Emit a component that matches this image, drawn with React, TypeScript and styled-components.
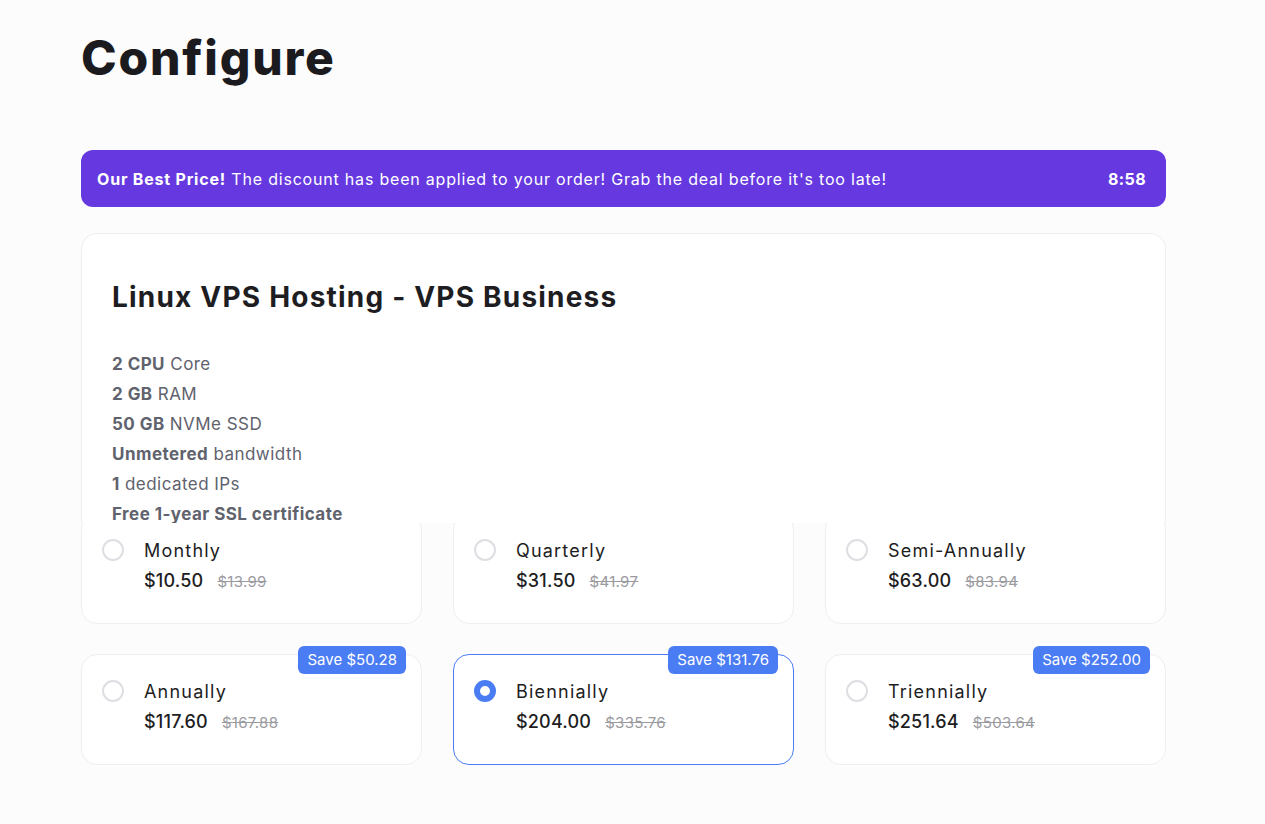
import React, { useState } from 'react';
import styled, { createGlobalStyle } from 'styled-components';

const GlobalStyle = createGlobalStyle`
  body {
    margin: 0;
    background: #fcfcfc;
    font-family: Inter, "Noto Sans", sans-serif;
    color: #1d1d22;
  }
`;

const Page = styled.div`
  width: 1085px;
  margin-left: 81px;
  padding-top: 28px;
`;

const Title = styled.h1`
  margin: 0;
  font-size: 48px;
  font-weight: 800;
  letter-spacing: 1.8px;
  line-height: 60px;
  color: #1b1b1f;
`;

const Banner = styled.div`
  margin-top: 62px;
  height: 57px;
  border-radius: 12px;
  background: #6639e0;
  color: #fff;
  display: flex;
  align-items: center;
  justify-content: space-between;
  padding: 0 20px 0 16px;
  font-size: 16px;
  letter-spacing: 0.8px;
`;

const Timer = styled.span`
  font-weight: 700;
  letter-spacing: 0.4px;
`;

const ProductCard = styled.div`
  position: relative;
  z-index: 1;
  margin-top: 26px;
  height: 290px;
  background: #fff;
  border: 1px solid #efefef;
  border-bottom: none;
  border-radius: 16px 16px 0 0;
  padding: 43px 30px 0;
  box-sizing: border-box;
  overflow: hidden;
`;

const ProductName = styled.h2`
  margin: 0;
  font-size: 28px;
  font-weight: 700;
  line-height: 40px;
  letter-spacing: 1.2px;
`;

const Features = styled.ul`
  list-style: none;
  margin: 32px 0 0;
  padding: 0;
  font-size: 17px;
  line-height: 30px;
  letter-spacing: 0.45px;
  color: #60626d;
`;

const Strong = styled.b`
  font-weight: 700;
`;

const Options = styled.div`
  margin-top: -10px;
  display: grid;
  grid-template-columns: repeat(3, 1fr);
  column-gap: 31px;
  row-gap: 30px;
`;

const OptionCard = styled.div<{ $active: boolean }>`
  position: relative;
  height: 111px;
  box-sizing: border-box;
  background: #fff;
  border: 1px solid ${(p) => (p.$active ? '#4a7cf4' : '#efefef')};
  border-radius: 16px;
  padding: 24px 20px 0;
  display: flex;
  gap: 20px;
  cursor: pointer;
`;

const Radio = styled.span<{ $active: boolean }>`
  flex: none;
  margin-top: 1px;
  width: 22px;
  height: 22px;
  box-sizing: border-box;
  border-radius: 50%;
  border: ${(p) => (p.$active ? '6px solid #4a7cf4' : '2px solid #dedee3')};
  background: #fff;
`;

const Info = styled.div`
  display: flex;
  flex-direction: column;
  gap: 4px;
`;

const Period = styled.div`
  font-size: 18px;
  line-height: 26px;
  letter-spacing: 1.2px;
`;

const PriceRow = styled.div`
  display: flex;
  align-items: baseline;
  gap: 14px;
`;

const Price = styled.span`
  font-size: 18px;
  font-weight: 500;
  line-height: 26px;
  letter-spacing: 0.2px;
`;

const OldPrice = styled.span`
  font-size: 15px;
  color: #9a9a9f;
  text-decoration: line-through;
  letter-spacing: 0.3px;
`;

const Badge = styled.span`
  position: absolute;
  top: -9px;
  right: 15px;
  background: #4a7cf4;
  color: #fff;
  font-size: 15px;
  line-height: 28px;
  padding: 0 9px;
  border-radius: 6px;
`;

const plans = [
  { name: 'Monthly', price: '$10.50', old: '$13.99' },
  { name: 'Quarterly', price: '$31.50', old: '$41.97' },
  { name: 'Semi-Annually', price: '$63.00', old: '$83.94' },
  { name: 'Annually', price: '$117.60', old: '$167.88', save: '$50.28' },
  { name: 'Biennially', price: '$204.00', old: '$335.76', save: '$131.76' },
  { name: 'Triennially', price: '$251.64', old: '$503.64', save: '$252.00' },
];

export default function App() {
  const [selected, setSelected] = useState('Biennially');

  return (
    <>
      <GlobalStyle />
      <Page>
        <Title>Configure</Title>

        <Banner>
          <span>
            <Strong>Our Best Price!</Strong> The discount has been applied to your order! Grab the deal before it's too late!
          </span>
          <Timer>8:58</Timer>
        </Banner>

        <ProductCard>
          <ProductName>Linux VPS Hosting - VPS Business</ProductName>
          <Features>
            <li><Strong>2 CPU</Strong> Core</li>
            <li><Strong>2 GB</Strong> RAM</li>
            <li><Strong>50 GB</Strong> NVMe SSD</li>
            <li><Strong>Unmetered</Strong> bandwidth</li>
            <li><Strong>1</Strong> dedicated IPs</li>
            <li><Strong>Free 1-year SSL certificate</Strong></li>
          </Features>
        </ProductCard>

        <Options>
          {plans.map((plan) => {
            const active = plan.name === selected;
            return (
              <OptionCard key={plan.name} $active={active} onClick={() => setSelected(plan.name)}>
                {plan.save && <Badge>Save {plan.save}</Badge>}
                <Radio $active={active} />
                <Info>
                  <Period>{plan.name}</Period>
                  <PriceRow>
                    <Price>{plan.price}</Price>
                    <OldPrice>{plan.old}</OldPrice>
                  </PriceRow>
                </Info>
              </OptionCard>
            );
          })}
        </Options>
      </Page>
    </>
  );
}
